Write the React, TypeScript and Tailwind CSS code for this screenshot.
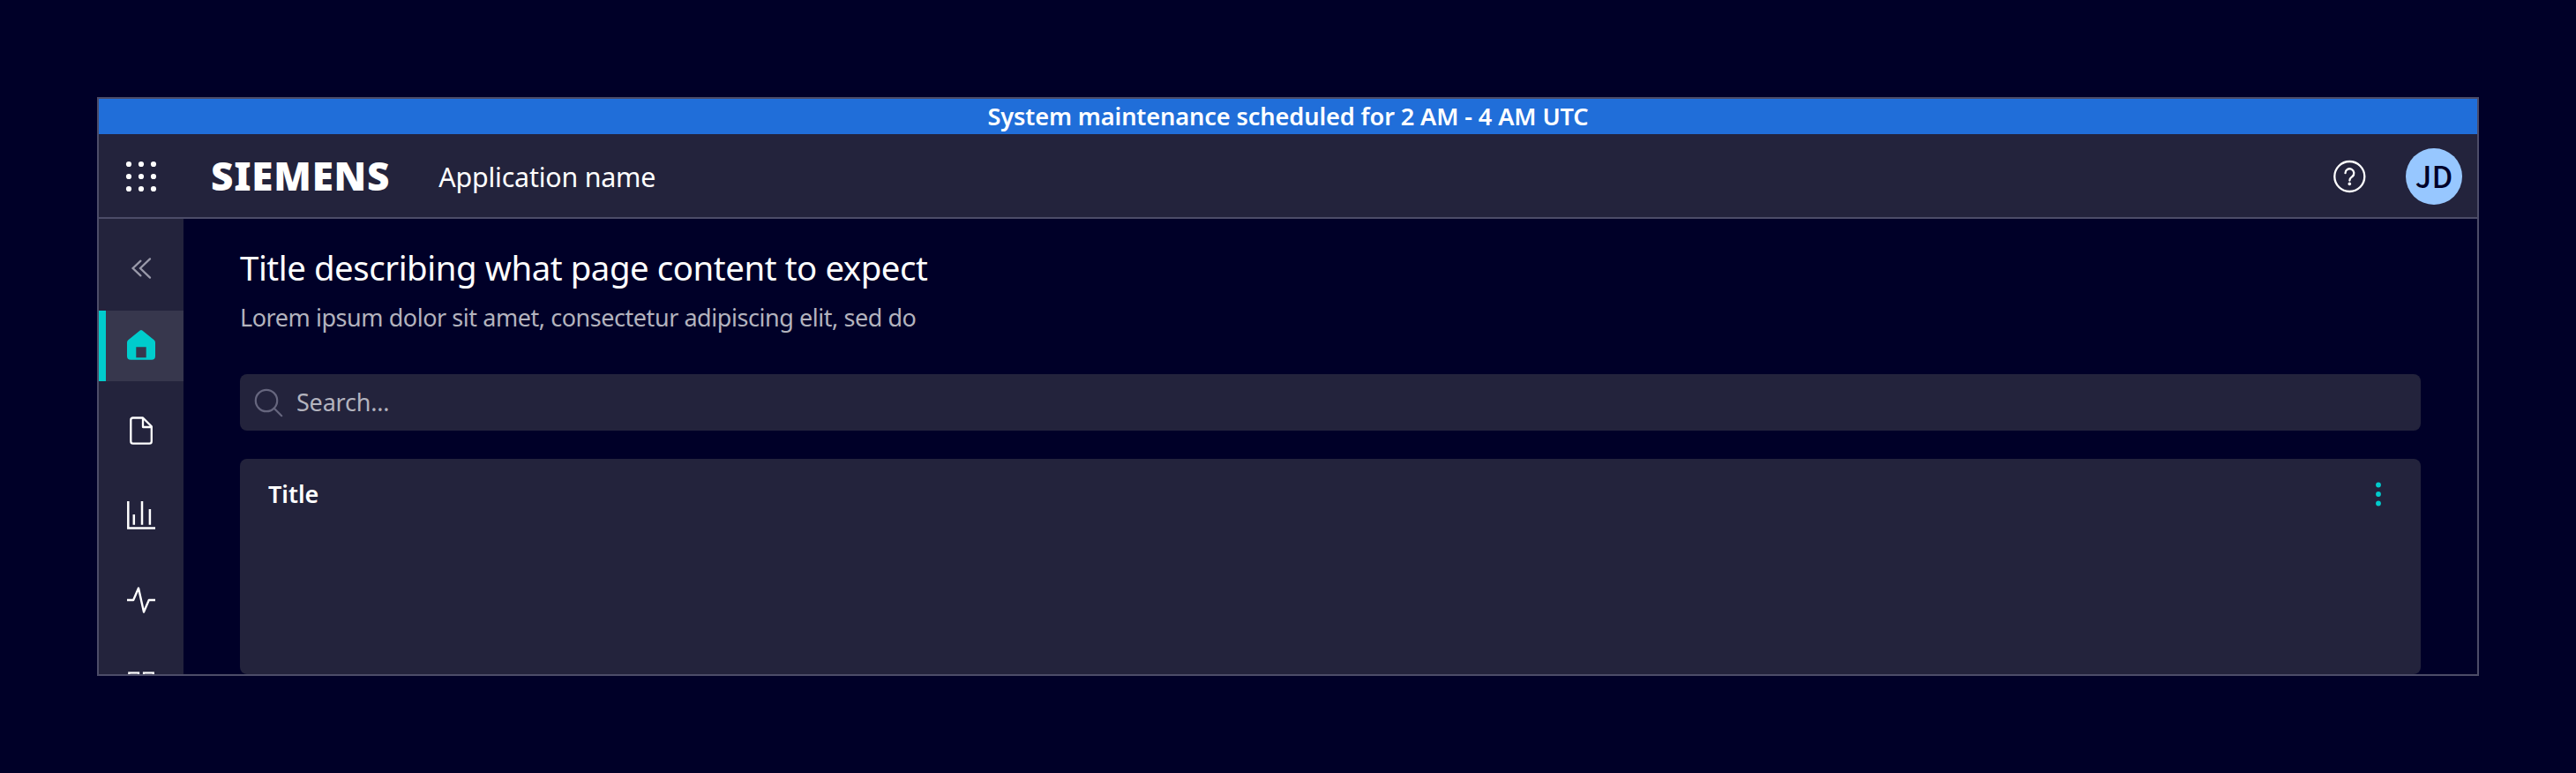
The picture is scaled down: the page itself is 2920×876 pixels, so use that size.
import type { ReactNode } from "react";

const dots = [6, 20, 34];

function LauncherIcon() {
  return (
    <svg className="size-10" viewBox="0 0 40 40" fill="currentColor">
      {dots.map((y) => dots.map((x) => <circle key={`${x}-${y}`} cx={x} cy={y} r="3.1" />))}
    </svg>
  );
}

function HelpIcon() {
  return (
    <svg className="size-10" viewBox="0 0 40 40" fill="none" stroke="currentColor" strokeWidth="2.3">
      <circle cx="20.3" cy="20" r="17" />
      <path d="M15.5 16.2a4.9 4.9 0 1 1 8 3.8c-1.7 1.3-3.1 2-3.1 4.6" strokeLinecap="round" />
      <circle cx="20.3" cy="28.4" r="1.8" fill="currentColor" stroke="none" />
    </svg>
  );
}

function CollapseIcon() {
  return (
    <svg className="size-10" viewBox="0 0 40 40" fill="none" stroke="currentColor" strokeWidth="2.3" strokeLinecap="round">
      <path d="M19.4 11.7 10.6 20l8.8 8.4M30 9.4 19 20l11 10.6" />
    </svg>
  );
}

function HomeIcon() {
  return (
    <svg className="size-10" viewBox="0 0 40 40" fill="currentColor">
      <path
        fillRule="evenodd"
        d="M18.7 2.5q1.3-1 2.6 0L34.6 13.2q1.4 1.2 1.4 3V31.5q0 4.3-4.3 4.3H8.3Q4 35.8 4 31.5V16.2q0-1.8 1.4-3ZM14.3 21.3v12h11.4v-12Z"
      />
    </svg>
  );
}

function DocumentIcon() {
  return (
    <svg className="size-10" viewBox="0 0 40 40" fill="none" stroke="currentColor" strokeWidth="2.3" strokeLinejoin="round">
      <path d="M22 5.5H10.8Q8.3 5.5 8.3 8V32Q8.3 34.7 10.8 34.7H29.3Q31.8 34.7 31.8 32V15.3ZM22 5.5V16H31.8" />
    </svg>
  );
}

function ChartIcon() {
  return (
    <svg className="size-10" viewBox="0 0 40 40" fill="none" stroke="currentColor" strokeWidth="2.5">
      <path d="M5.3 4v30.6H36M11.8 19v11.8M21 4v26.8M29.9 13v17.8" />
    </svg>
  );
}

function PulseIcon() {
  return (
    <svg className="size-10" viewBox="0 0 40 40" fill="none" stroke="currentColor" strokeWidth="2.4" strokeLinejoin="round">
      <path d="M4 20H11.2L17 6.5 23 33.5 28.8 20H36" />
    </svg>
  );
}

function TilesIcon() {
  return (
    <svg className="size-10" viewBox="0 0 40 40" fill="none" stroke="currentColor" strokeWidth="2.2">
      <rect x="6.3" y="6.5" width="10.8" height="10.8" />
      <rect x="23" y="6.5" width="10.8" height="10.8" />
      <rect x="6.3" y="23" width="10.8" height="10.8" />
      <rect x="23" y="23" width="10.8" height="10.8" />
    </svg>
  );
}

function SearchIcon() {
  return (
    <svg className="size-10" viewBox="0 0 40 40" fill="none" stroke="currentColor" strokeWidth="2.2" strokeLinecap="round">
      <circle cx="18" cy="18" r="12.2" />
      <path d="m27 27 8.2 8.2" />
    </svg>
  );
}

function KebabIcon() {
  return (
    <svg className="size-10" viewBox="0 0 40 40" fill="currentColor">
      <circle cx="20" cy="9.5" r="2.9" />
      <circle cx="20" cy="20" r="2.9" />
      <circle cx="20" cy="30.5" r="2.9" />
    </svg>
  );
}

function NavItem({ children, active = false }: { children: ReactNode; active?: boolean }) {
  return (
    <button
      className={
        active
          ? "flex h-20 shrink-0 items-center justify-center border-l-8 border-[#00cccc] bg-[#37374d] pr-2 text-[#00cccc]"
          : "flex h-20 shrink-0 items-center justify-center"
      }
    >
      {children}
    </button>
  );
}

export default function App() {
  return (
    <div className="h-[876px] w-[2920px] bg-[#000028] p-[110px] font-['Noto_Sans',sans-serif] text-white">
      <div className="flex h-[656px] flex-col overflow-hidden border-2 border-[#4c4c68]">
        <div className="flex h-10 shrink-0 items-center justify-center bg-[#206ed9] text-[27.2px] leading-10 font-semibold tracking-[-0.13px]">
          System maintenance scheduled for 2 AM - 4 AM UTC
        </div>

        <header className="flex h-24 shrink-0 items-center border-b-2 border-[#4c4c68] bg-[#23233c] pt-0.5 pr-[17px] pl-7">
          <LauncherIcon />
          <span className="ml-[59px] pb-[3px] text-[44px] leading-none font-black tracking-[0.8px]">SIEMENS</span>
          <span className="ml-[55px] pt-0.5 text-[30.4px] leading-10 tracking-[-0.22px]">Application name</span>
          <div className="ml-auto flex items-center gap-[44px]">
            <HelpIcon />
            <div className="flex size-16 items-center justify-center rounded-full bg-[#97c7ff] pb-0.5 font-['Noto_Sans_CJK_SC',sans-serif] text-[34px] leading-none font-medium text-[#000028]">
              JD
            </div>
          </div>
        </header>

        <div className="flex min-h-0 flex-1">
          <nav className="flex w-24 shrink-0 flex-col gap-4 overflow-hidden bg-[#23233c]">
            <button className="-mb-4 flex h-[104px] shrink-0 items-center justify-center pt-2 text-[#9999a9]">
              <CollapseIcon />
            </button>
            <NavItem active>
              <HomeIcon />
            </NavItem>
            <NavItem>
              <DocumentIcon />
            </NavItem>
            <NavItem>
              <ChartIcon />
            </NavItem>
            <NavItem>
              <PulseIcon />
            </NavItem>
            <NavItem>
              <TilesIcon />
            </NavItem>
          </nav>

          <main className="flex flex-1 flex-col px-16 pt-[31px]">
            <h1 className="text-[38.4px] leading-[48px] tracking-[-0.45px]">Title describing what page content to expect</h1>
            <p className="mt-[13px] text-[27px] leading-10 tracking-[-0.45px] text-[#b3b3be]">
              Lorem ipsum dolor sit amet, consectetur adipiscing elit, sed do
            </p>
            <div className="mt-11 flex h-16 shrink-0 items-center rounded-lg bg-[#23233c] pl-3">
              <span className="text-[#66667e]">
                <SearchIcon />
              </span>
              <span className="ml-3 text-[27px] leading-10 tracking-[-0.2px] text-[#b3b3be]">Search...</span>
            </div>
            <section className="mt-8 flex-1 rounded-lg bg-[#23233c] px-8 pt-5">
              <div className="flex items-center justify-between">
                <h2 className="text-[27px] leading-10 font-semibold">Title</h2>
                <button className="-mr-1 flex w-10 text-[#00cccc]">
                  <KebabIcon />
                </button>
              </div>
            </section>
          </main>
        </div>
      </div>
    </div>
  );
}
